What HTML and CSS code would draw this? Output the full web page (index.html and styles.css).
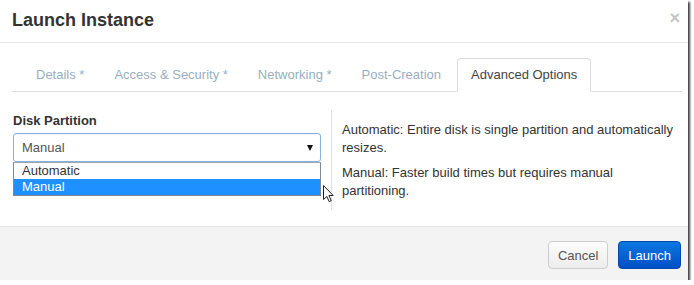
FILE: index.html
```html
<!DOCTYPE html>
<html lang="en">
<head>
  <meta charset="UTF-8" />
  <title>Launch Instance</title>
  <link rel="stylesheet" href="styles.css">
</head>
<body>

  <div class="modal">
    <div class="modal-header">
      <h3>Launch Instance</h3>
      <span class="close">&times;</span>
    </div>

    <div class="modal-body">
      <!-- Workflow tabs -->
      <ul class="nav-tabs">
        <li><a href="#">Details *</a></li>
        <li><a href="#">Access &amp; Security *</a></li>
        <li><a href="#">Networking *</a></li>
        <li><a href="#">Post-Creation</a></li>
        <li class="active"><a href="#">Advanced Options</a></li>
      </ul>

      <div class="tab-pane">
        <div class="left-col">
          <label>Disk Partition</label>
          <div class="select-wrap">
            <div class="select">
              <span>Manual</span>
              <span class="caret"></span>
            </div>
            <!-- open dropdown -->
            <ul class="select-menu">
              <li>Automatic</li>
              <li class="selected">Manual</li>
            </ul>
            <svg class="cursor" width="13" height="19" viewBox="0 0 13 19">
              <path d="M1.5 1.5 L1.5 15.5 L4.8 12.4 L7.2 17.6 L9.3 16.7 L6.9 11.5 L11.2 11.5 Z" fill="#fff" stroke="#222" stroke-width="1" stroke-linejoin="round"/>
            </svg>
          </div>
        </div>
        <div class="right-col">
          <p>Automatic: Entire disk is single partition and automatically resizes.</p>
          <p>Manual: Faster build times but requires manual partitioning.</p>
        </div>
      </div>
    </div>

    <div class="modal-footer">
      <button class="btn">Cancel</button>
      <button class="btn btn-primary">Launch</button>
    </div>
  </div>

</body>
</html>
```

FILE: styles.css
```css
* {
  box-sizing: border-box;
}

body {
  margin: 0;
  background: #fff;
  font-family: "Liberation Sans", Arial, sans-serif;
  font-size: 13px;
  color: #333;
}

.modal {
  width: 688px;
  height: 280px;
  background: #fff;
  box-shadow: 2px 2px 2px rgba(0, 0, 0, 0.75);
  display: flex;
  flex-direction: column;
}

/* Header */
.modal-header {
  display: flex;
  justify-content: space-between;
  align-items: flex-start;
  height: 43px;
  padding: 8px 8px 10px 12px;
  border-bottom: 1px solid #e5e5e5;
}

.modal-header h3 {
  margin: 0;
  font-size: 18px;
  line-height: 24px;
  font-weight: bold;
  color: #333;
}

.close {
  font-size: 18px;
  font-weight: bold;
  line-height: 18px;
  margin-top: 1px;
  color: #c4c4c4;
  cursor: pointer;
}

/* Body */
.modal-body {
  padding: 15px 6px 16px 12px;
}

.nav-tabs {
  list-style: none;
  margin: 0;
  padding: 0 0 0 10px;
  display: flex;
  border-bottom: 1px solid #ddd;
}

.nav-tabs li {
  margin: 0 2px -1px 0;
}

.nav-tabs a {
  display: block;
  padding: 7px 13px;
  line-height: 18px;
  border: 1px solid transparent;
  border-radius: 4px 4px 0 0;
  color: #98afc1;
  text-decoration: none;
}

.nav-tabs .active a {
  color: #444;
  background: #fff;
  border-color: #ddd;
  border-bottom-color: #fff;
}

.tab-pane {
  display: flex;
  margin: 18px 0 0 1px;
  height: 100px;
}

.left-col {
  width: 318px;
  padding: 2px 10px 0 0;
}

.left-col label {
  display: block;
  font-weight: bold;
  line-height: 18px;
  color: #333;
}

.select-wrap {
  position: relative;
  margin-top: 3px;
}

.select {
  display: flex;
  justify-content: space-between;
  align-items: center;
  height: 29px;
  padding: 0 7px 0 8px;
  border: 1px solid #8db1de;
  border-radius: 3px;
  box-shadow: inset 0 1px 1px rgba(0, 0, 0, 0.06);
  color: #555;
  line-height: 18px;
}

.caret {
  width: 0;
  height: 0;
  border-left: 3px solid transparent;
  border-right: 3px solid transparent;
  border-top: 6px solid #111;
  margin-top: 1px;
}

.select-menu {
  position: absolute;
  top: 29px;
  left: 0;
  width: 308px;
  margin: 0;
  padding: 0;
  list-style: none;
  background: #fff;
  border: 1px solid #828790;
  border-top-color: #a0a6ae;
}

.select-menu li {
  height: 16px;
  line-height: 16px;
  padding-left: 8px;
  color: #333;
}

.select-menu .selected {
  background: #1e90ff;
  color: #fff;
}

.cursor {
  position: absolute;
  left: 309px;
  top: 51px;
}

.right-col {
  width: 351px;
  border-left: 1px solid #e2e2e2;
  padding: 11px 0 0 10px;
}

.right-col p {
  margin: 0 0 7px;
  line-height: 18px;
  color: #333;
}

/* Footer */
.modal-footer {
  flex: 1;
  display: flex;
  justify-content: flex-end;
  align-items: flex-start;
  gap: 10px;
  padding: 14px 7px 0 0;
  border-top: 1px solid #e3e3e3;
  background: #f3f3f3;
}

.btn {
  height: 28px;
  padding: 0 9px;
  font-family: inherit;
  font-size: 13px;
  color: #555;
  background: linear-gradient(#fdfdfd, #ececec);
  border: 1px solid #cdcdcd;
  border-radius: 4px;
  cursor: pointer;
}

.btn-primary {
  color: #fff;
  background: linear-gradient(#0b78e0, #004fc6);
  border-color: #0547a8;
}
```
